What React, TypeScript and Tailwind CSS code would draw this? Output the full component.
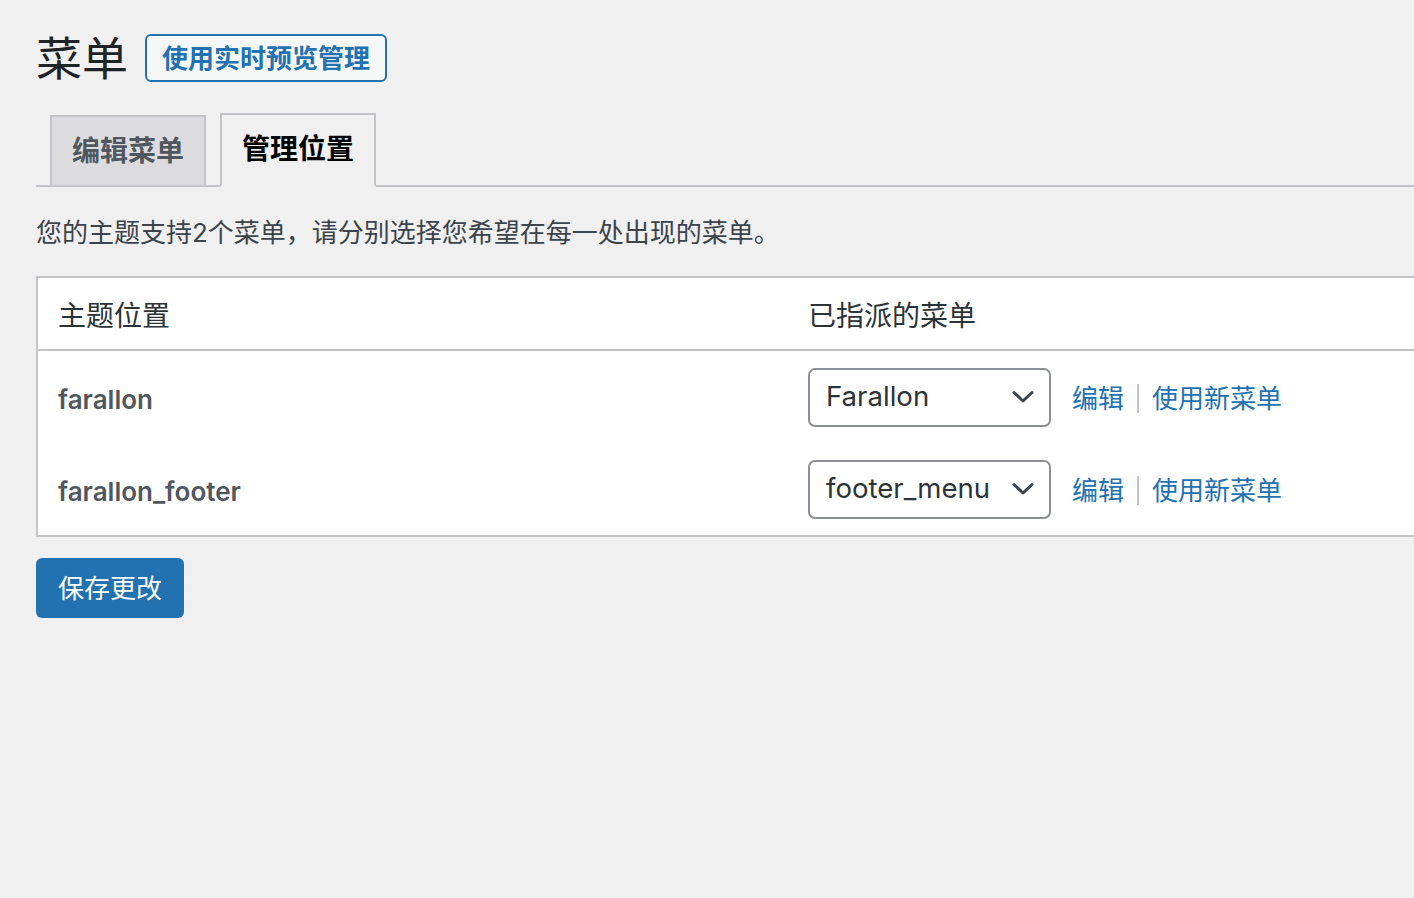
import React from "react";

const font = "font-['Inter','Noto_Sans_CJK_SC',sans-serif]";

function Chevron() {
  return (
    <svg width="22" height="14" viewBox="0 0 22 14" fill="none">
      <path d="M2 2.5 L11 11 L20 2.5" stroke="#3c434a" strokeWidth="3" strokeLinecap="round" strokeLinejoin="round" />
    </svg>
  );
}

function Select({ value }: { value: string }) {
  return (
    <div className="flex h-[59px] w-[243px] shrink-0 items-center justify-between rounded-[7px] border-2 border-[#8c8f94] bg-white pl-[16px] pr-[15px]">
      <span className="text-[27.6px] leading-none text-[#2c3338]">{value}</span>
      <Chevron />
    </div>
  );
}

function Row({ name, menu }: { name: string; menu: string }) {
  return (
    <div className="flex h-[92px] items-center">
      <div className="w-[750px] shrink-0 pl-[20px] pt-[5px] text-[26px] font-semibold text-[#50575e]">{name}</div>
      <div className="flex items-center pl-[20px]">
        <Select value={menu} />
        <div className="mt-[3px] flex items-center">
          <span className="ml-[21px] text-[26px] text-[#2271b1]">编辑</span>
          <span className="ml-[13px] h-[29px] w-[2px] bg-[#c3c4c7]" />
          <span className="ml-[13px] text-[26px] text-[#2271b1]">使用新菜单</span>
        </div>
      </div>
    </div>
  );
}

export default function App() {
  return (
    <div className={`${font} h-[898px] w-[1414px] overflow-hidden bg-[#f0f0f1] pl-[36px] pt-[34px]`}>
      <div className="flex items-center">
        <h1 className="text-[46px] font-normal leading-none text-[#1d2327]">菜单</h1>
        <div className="ml-[17px] flex h-[48px] items-center rounded-[6px] border-2 border-[#2271b1] bg-[#f6f7f7] px-[15px] text-[26px] font-semibold text-[#2271b1]">
          使用实时预览管理
        </div>
      </div>

      <div className="mt-[31px] flex w-[1600px] items-end gap-[14px] border-b-2 border-[#c3c4c7] pl-[14px]">
        <div className="border-2 border-b-0 border-[#c3c4c7] bg-[#dcdcde] px-[20px] py-[10px] text-[28px] font-bold leading-[48px] text-[#50575e]">
          编辑菜单
        </div>
        <div className="-mb-[2px] border-2 border-[#c3c4c7] border-b-[#f0f0f1] bg-[#f0f0f1] px-[20px] pb-[12px] pt-[10px] text-[28px] font-bold leading-[48px] text-black">
          管理位置
        </div>
      </div>

      <p className="mt-[26px] text-[26px] leading-[39px] text-[#3c434a]">
        您的主题支持2个菜单，请分别选择您希望在每一处出现的菜单。
      </p>

      <div className="mt-[24px] w-[1560px] border-2 border-[#c3c4c7] bg-white">
        <div className="flex h-[73px] items-center border-b-2 border-[#c3c4c7] pt-[4px] text-[28px] text-[#2c3338]">
          <div className="w-[750px] shrink-0 pl-[20px]">主题位置</div>
          <div className="pl-[20px]">已指派的菜单</div>
        </div>
        <Row name="farallon" menu="Farallon" />
        <Row name="farallon_footer" menu="footer_menu" />
      </div>

      <div className="mt-[21px] flex h-[60px] w-[148px] items-center justify-center rounded-[6px] bg-[#2271b1] text-[26px] text-white">
        保存更改
      </div>
    </div>
  );
}
